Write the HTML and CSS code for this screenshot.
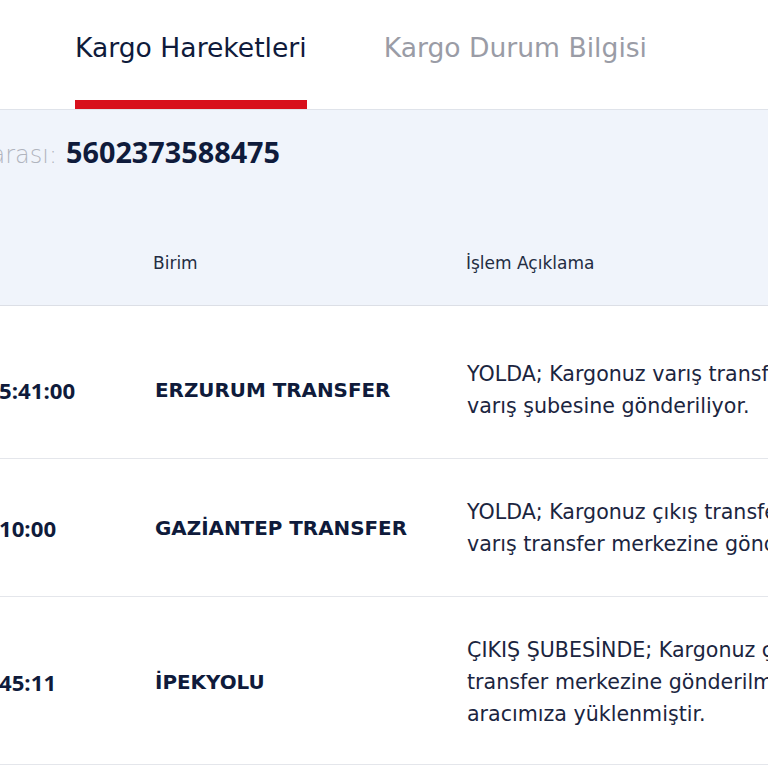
FILE: index.html
```html
<!DOCTYPE html>
<html lang="tr">
<head>
<meta charset="utf-8">
<title>Kargo Hareketleri</title>
<link rel="stylesheet" href="styles.css">
</head>
<body>
<div class="page">
  <nav class="tabs">
    <div class="tab tab-active">Kargo Hareketleri</div>
    <div class="tab">Kargo Durum Bilgisi</div>
  </nav>
  <section class="info">
    <div class="tracking">
      <span class="tracking-label">Kargo Takip Numarası:</span>
      <span class="tracking-number">5602373588475</span>
    </div>
    <div class="thead">
      <div class="th"></div>
      <div class="th">Birim</div>
      <div class="th">İşlem Açıklama</div>
    </div>
  </section>
  <div class="tbody">
    <div class="tr tr-first">
      <div class="td time">5:41:00</div>
      <div class="td unit">ERZURUM TRANSFER</div>
      <div class="td desc">YOLDA; Kargonuz varış transfer merkezinden çıkış yaptı,<br>varış şubesine gönderiliyor.</div>
    </div>
    <div class="tr">
      <div class="td time">10:00</div>
      <div class="td unit">GAZİANTEP TRANSFER</div>
      <div class="td desc">YOLDA; Kargonuz çıkış transfer merkezinden çıktı ve<br>varış transfer merkezine gönderiliyor.</div>
    </div>
    <div class="tr tr-last">
      <div class="td time">45:11</div>
      <div class="td unit">İPEKYOLU</div>
      <div class="td desc">ÇIKIŞ ŞUBESİNDE; Kargonuz çıkış şubesinden çıkış<br>transfer merkezine gönderilmek üzere transfer<br>aracımıza yüklenmiştir.</div>
    </div>
  </div>
</div>
</body>
</html>
```
FILE: styles.css
```css
html, body {
  margin: 0;
  padding: 0;
  background: #ffffff;
  overflow: hidden;
}
body {
  font-family: "DejaVu Sans", "Open Sans", sans-serif;
  color: #0f1b3b;
}
.page {
  width: 768px;
  height: 768px;
  overflow: hidden;
}
.tabs {
  display: flex;
  gap: 77px;
  padding-left: 75px;
  height: 109px;
  border-bottom: 1px solid #dfe3ea;
}
.tab {
  font-size: 26.6px;
  line-height: 32px;
  padding-top: 32px;
  padding-bottom: 36px;
  border-bottom: 9px solid transparent;
  color: #9a9ca6;
  white-space: nowrap;
}
.tab-active {
  color: #0f1b3b;
  border-bottom-color: #d8101c;
}
.info {
  background: #f0f4fb;
  padding-top: 23px;
  border-bottom: 1px solid #dcdfe6;
}
.tracking {
  display: flex;
  align-items: baseline;
  height: 38px;
  line-height: 38px;
  white-space: nowrap;
}
.tracking-label {
  width: 400px;
  margin-left: -343px;
  text-align: right;
  flex: none;
  font-size: 24px;
  font-weight: 200;
  color: #b0b4be;
}
.tracking-number {
  margin-left: 9px;
  font-family: "Open Sans", sans-serif;
  font-weight: 700;
  font-size: 28.8px;
  color: #0f1b3b;
}
.thead {
  display: grid;
  grid-template-columns: 153px 313px 1fr;
  margin-top: 80px;
  padding-bottom: 30px;
  font-size: 17px;
  line-height: 24px;
  color: #232c42;
  white-space: nowrap;
}
.tr {
  display: grid;
  grid-template-columns: 153px 313px 1fr;
  align-items: center;
  padding: 37px 0 36px;
  border-bottom: 1px solid #e4e6eb;
}
.tr-first {
  padding-top: 52px;
}
.tr-last {
  padding-bottom: 34px;
}
.td {
  white-space: nowrap;
}
.time {
  margin-left: -1px;
  font-family: "Open Sans", sans-serif;
  font-weight: 700;
  font-size: 22.2px;
  color: #0f1b3b;
}
.unit {
  font-weight: 700;
  font-size: 19.9px;
  color: #0f1b3b;
  padding-left: 2px;
}
.desc {
  font-size: 20.6px;
  line-height: 32px;
  color: #1b2540;
  padding-left: 1px;
}
```
